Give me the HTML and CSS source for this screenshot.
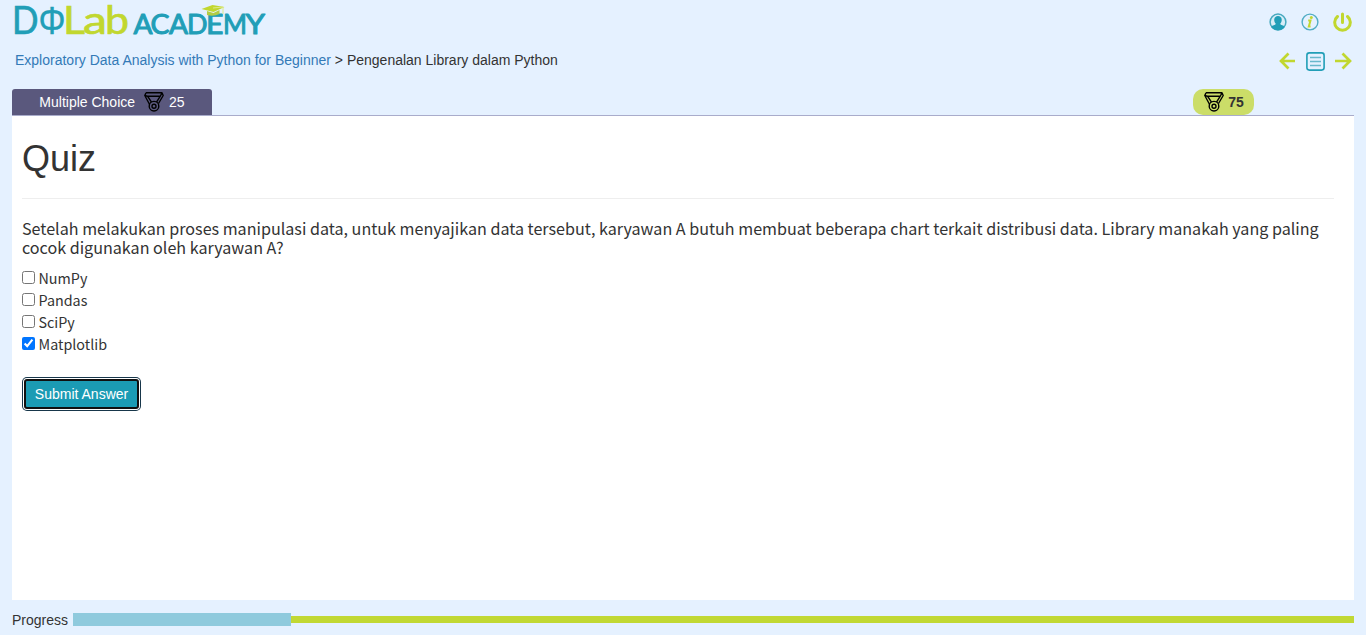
FILE: index.html
```html
<!DOCTYPE html>
<html lang="id">
<head>
<meta charset="utf-8">
<title>DQLab Academy - Quiz</title>
<link rel="stylesheet" href="styles.css">
</head>
<body>
<svg class="symbols" width="0" height="0" aria-hidden="true">
  <symbol id="medal" viewBox="0 0 20 20">
    <g fill="none" stroke="#000" stroke-width="1.400" stroke-linejoin="round">
      <path d="M2 .8h16l1.200 2.700-4.700 8M18 .8l-1.700 3.400H3.500L.8 3.500 2 .8M.8 3.500l4.800 9M3.500 4.200l4 6M16.300 4.200l-3.800 6"/>
      <circle cx="10" cy="14.200" r="4.800"/>
      <circle cx="10" cy="14.200" r="2"/>
    </g>
  </symbol>
</svg>
<header class="header">
  <div class="topbar">
    <svg class="logo" width="252" height="41" viewBox="0 0 252 41">
      <g class="logo-main">
        <text class="teal" x="-3" y="32.300" textLength="26.500" lengthAdjust="spacingAndGlyphs">D</text>
        <text class="teal phi" x="23.500" y="32.300" textLength="27" lengthAdjust="spacingAndGlyphs">Φ</text>
        <text class="lime" x="48" y="32.300" textLength="22" lengthAdjust="spacingAndGlyphs">L</text>
        <text class="lime" x="68" y="32.300" textLength="24" lengthAdjust="spacingAndGlyphs">a</text>
        <text class="lime" x="90" y="32.300" textLength="24" lengthAdjust="spacingAndGlyphs">b</text>
      </g>
      <g class="logo-sub">
        <text class="teal" x="118.500" y="32" textLength="19" lengthAdjust="spacingAndGlyphs">A</text>
        <text class="teal" x="135.500" y="32" textLength="19" lengthAdjust="spacingAndGlyphs">C</text>
        <text class="teal" x="154" y="32" textLength="19" lengthAdjust="spacingAndGlyphs">A</text>
        <text class="teal" x="172" y="32" textLength="20.500" lengthAdjust="spacingAndGlyphs">D</text>
        <text class="teal" x="191" y="32" textLength="17.500" lengthAdjust="spacingAndGlyphs">E</text>
        <text class="teal" x="208" y="32" textLength="24" lengthAdjust="spacingAndGlyphs">M</text>
        <text class="teal" x="230.500" y="32" textLength="19.500" lengthAdjust="spacingAndGlyphs">Y</text>
      </g>
      <path d="M186.500 7l11-4 12 2-11 5z" fill="#c1d72f"/>
      <path d="M192 9l6.500 2 6-3v4q-6 3-12.500 1z" fill="#b3cd45"/>
      <path d="M198 6l10-1v7" fill="none" stroke="#dce98b"/>
    </svg>
    <nav class="tools">
      <svg width="18" height="18" viewBox="0 0 18 18"><circle cx="9" cy="9" r="7.900" fill="#d8edf7" stroke="#46a9bf" stroke-width="1.500"/><path d="M2.300 14c1-2 4-1.500 4.500-3.200C4.300 8.500 4.600 3 9 3s4.700 5.500 2.200 7.800c.5 1.700 3.500 1.200 4.500 3.200q-2.500 3.200-6.700 3.200T2.300 14z" fill="#219eb7"/></svg>
      <svg width="18" height="18" viewBox="0 0 18 18"><circle cx="9" cy="9" r="7.900" fill="none" stroke="#50adc4" stroke-width="1.400"/><path d="M7.200 7.500h2.300l-1.700 6h1.800" fill="none" stroke="#c1d72f" stroke-width="2"/><circle cx="10.300" cy="4.500" r="1.500" fill="#c1d72f"/></svg>
      <svg width="19" height="20" viewBox="0 0 19 20"><path d="M4.500 4.500A7.800 7.800 0 1 0 14.500 4.500M9.500 2v8.500" fill="none" stroke="#c1d72f" stroke-width="3" stroke-linecap="round"/></svg>
    </nav>
  </div>
  <div class="crumbbar">
    <p class="crumbs"><a href="#">Exploratory Data Analysis with Python for Beginner</a> &gt; Pengenalan Library dalam Python</p>
    <nav class="pager">
      <svg width="17" height="18" viewBox="0 0 17 18"><path d="M9.500 1.500L2 9l7.500 7.500M2 9h14" fill="none" stroke="#c1d72f" stroke-width="2.700"/></svg>
      <svg width="19" height="19" viewBox="0 0 19 19"><rect x=".9" y=".9" width="17.200" height="17.200" rx="2.500" fill="none" stroke="#219eb7" stroke-width="1.600"/><path d="M4 5.500h11M4 9.500h11M4 13.500h11" stroke="#68b8cc" stroke-width="1.400"/></svg>
      <svg width="17" height="18" viewBox="0 0 17 18"><path d="M7.500 1.500L15 9l-7.500 7.500M15 9H0" fill="none" stroke="#c1d72f" stroke-width="2.700"/></svg>
    </nav>
  </div>
</header>
<div class="tabs">
  <div class="tab">Multiple Choice <svg class="medal" width="20" height="20"><use href="#medal"/></svg>25</div>
  <div class="score"><svg class="medal" width="20" height="20"><use href="#medal"/></svg>75</div>
</div>
<main class="panel">
  <h1 class="title">Quiz</h1>
  <p class="question">Setelah melakukan proses manipulasi data, untuk menyajikan data tersebut, karyawan A butuh membuat beberapa chart terkait distribusi data. Library manakah yang paling cocok digunakan oleh karyawan A?</p>
  <label class="option"><input class="check" type="checkbox">NumPy</label>
  <label class="option"><input class="check" type="checkbox">Pandas</label>
  <label class="option"><input class="check" type="checkbox">SciPy</label>
  <label class="option"><input class="check" type="checkbox" checked>Matplotlib</label>
  <button class="submit" type="button">Submit Answer</button>
</main>
<footer class="footer">
  <span>Progress</span>
  <div class="track"><div class="done"></div><div class="rest"></div></div>
</footer>
</body>
</html>
```

FILE: styles.css
```css
* { box-sizing: border-box; }
body {
  margin: 0;
  height: 635px;
  padding: 0 12px;
  display: flex;
  flex-direction: column;
  overflow: hidden;
  background: #e5f1ff;
  color: #333;
  font: 14px/20px "Liberation Sans", Arial, sans-serif;
}
svg { display: block; flex: none; }
.symbols { display: none; }
.header { height: 89px; padding-left: 3px; }
.topbar { height: 43px; padding-top: 2px; display: flex; justify-content: space-between; }
.logo { overflow: visible; }
.logo-main { font: 39px Lato, sans-serif; stroke-width: .7px; }
.logo-main .phi { font: 39px "Liberation Sans", sans-serif; stroke-width: .3px; }
.logo-sub { font: 27px Lato, sans-serif; stroke-width: 1px; stroke-linejoin: round; }
.teal { fill: #219eb7; stroke: #219eb7; }
.lime { fill: #c1d72f; stroke: #c1d72f; }
.tools { display: flex; align-items: center; gap: 14px; height: 39px; padding-right: 2px; }
.crumbbar { display: flex; justify-content: space-between; padding-top: 7px; }
.crumbs { margin: 0; }
.crumbs a { color: #337ab7; text-decoration: none; }
.pager { display: flex; align-items: center; gap: 10px; height: 22px; padding-right: 2px; }
.tabs { height: 27px; display: flex; justify-content: space-between; border-bottom: 1px solid #a9accb; }
.tab {
  width: 200px;
  height: 26px;
  display: flex;
  align-items: center;
  justify-content: center;
  background: #5a587d;
  color: #fff;
  border-radius: 3px 3px 0 0;
}
.tab .medal { margin: 0 5px 0 9px; }
.score {
  width: 61px;
  height: 26px;
  margin-right: 100px;
  display: flex;
  align-items: center;
  justify-content: center;
  gap: 4px;
  padding-left: 1px;
  background: #cbdd68;
  border-radius: 10px;
  font-weight: bold;
}
.panel { height: 484px; padding: 23px 20px 0 10px; background: #fff; }
.title {
  margin: 0 0 20px;
  height: 60px;
  border-bottom: 1px solid #eee;
  font-size: 36px;
  font-weight: 500;
  line-height: 40px;
}
.question {
  margin: 0 0 10px;
  font: 400 16.120px/19px "Noto Sans CJK SC", sans-serif;
}
.option {
  display: flex;
  align-items: center;
  height: 22px;
  font: 400 14.330px/22px "Noto Sans CJK SC", sans-serif;
}
.check { width: 13px; height: 13px; margin: 0 3.500px 2px 0; }
.submit {
  display: block;
  width: 115px;
  height: 30px;
  margin: 24px 0 0 2px;
  padding: 0;
  border: 2px solid #101010;
  border-radius: 3px;
  background: #1b9bb4;
  color: #fff;
  font: 14px/20px "Liberation Sans", Arial, sans-serif;
  box-shadow: 0 0 0 1px #fff, 0 0 0 2px #17364a;
}
.footer { display: flex; gap: 5px; align-items: center; height: 35px; padding-top: 5px; }
.track { flex: 1; display: flex; align-items: center; padding-bottom: 2px; }
.done { width: 218px; height: 13px; background: #8fcadd; }
.rest { flex: 1; height: 7px; background: #c1d834; }
```
